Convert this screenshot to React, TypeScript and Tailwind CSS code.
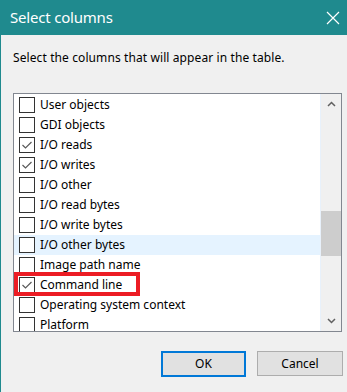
const rows = [
  { label: "User objects", checked: false },
  { label: "GDI objects", checked: false },
  { label: "I/O reads", checked: true },
  { label: "I/O writes", checked: true },
  { label: "I/O other", checked: false },
  { label: "I/O read bytes", checked: false },
  { label: "I/O write bytes", checked: false },
  { label: "I/O other bytes", checked: false, hover: true },
  { label: "Image path name", checked: false },
  { label: "Command line", checked: true, marked: true },
  { label: "Operating system context", checked: false },
  { label: "Platform", checked: false },
];

function CheckBox({ checked }: { checked: boolean }) {
  return (
    <div className="flex h-[16px] w-[16px] shrink-0 items-center justify-center border border-[#333333] bg-white">
      {checked && (
        <svg width="12" height="10" viewBox="0 0 12 10">
          <polyline points="1.5,5 4.5,8 10.5,2" fill="none" stroke="#5a5a5a" strokeWidth="1.2" />
        </svg>
      )}
    </div>
  );
}

export default function App() {
  return (
    <div
      className="relative flex h-[392px] w-[347px] flex-col border-l border-[#1f8a8e] bg-[#f0f0f0] text-[12px] text-black"
      style={{ fontFamily: '"Noto Sans", "Open Sans", sans-serif' }}
    >
      <div className="flex h-[35px] shrink-0 items-center justify-between bg-[#1f8a8e] pl-[9px] pr-[6px] text-white">
        <span className="text-[15px] tracking-[-0.2px]">Select columns</span>
        <svg width="14" height="14" viewBox="0 0 14 14" className="mr-[1px]">
          <path d="M1 1L13 13M13 1L1 13" stroke="white" strokeWidth="1.2" />
        </svg>
      </div>

      <div className="ml-[12px] mt-[15px] h-[16px] leading-[16px] tracking-[0.1px]">
        Select the columns that will appear in the table.
      </div>

      <div className="ml-[12px] mt-[27px] flex h-[239px] w-[329px] border border-[#828790] bg-white">
        <div className="flex-1 overflow-hidden border-r border-[#e8f1fb] pt-[1px]">
          {rows.map((r) => (
            <div
              key={r.label}
              className={`flex h-[20px] items-center gap-[5px] pl-[5px] whitespace-nowrap ${r.hover ? "bg-[#e5f3ff]" : ""}`}
            >
              <CheckBox checked={r.checked} />
              <span>{r.label}</span>
            </div>
          ))}
        </div>
        <div className="flex w-[20px] shrink-0 flex-col bg-[#f0f0f0]">
          <div className="flex h-[20px] items-center justify-center">
            <svg width="9" height="6" viewBox="0 0 9 6">
              <polyline points="1,5 4.5,1.5 8,5" fill="none" stroke="#606060" strokeWidth="1.5" />
            </svg>
          </div>
          <div className="flex-1 pt-[97px]">
            <div className="h-[45px] bg-[#cdcdcd]" />
          </div>
          <div className="flex h-[20px] items-center justify-center">
            <svg width="9" height="6" viewBox="0 0 9 6">
              <polyline points="1,1 4.5,4.5 8,1" fill="none" stroke="#606060" strokeWidth="1.5" />
            </svg>
          </div>
        </div>
      </div>

      <div className="mt-[19px] flex justify-end gap-[11px] pr-[4px]">
        <button className="h-[26px] w-[85px] border-2 border-[#0078d7] bg-[#e1e1e1]">OK</button>
        <button className="h-[25px] w-[86px] border border-[#adadad] bg-[#e1e1e1]">Cancel</button>
      </div>

      <div className="absolute left-[13px] top-[272px] h-[24px] w-[126px] border-4 border-[#ec1c24]" />
    </div>
  );
}
